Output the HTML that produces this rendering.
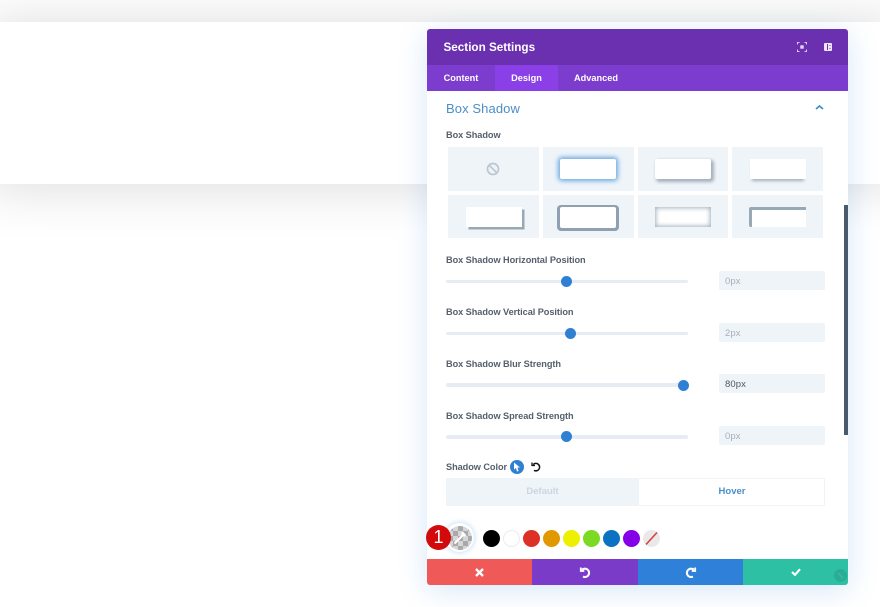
<!DOCTYPE html>
<html><head><meta charset="utf-8">
<style>
html,body{margin:0;padding:0;width:880px;height:607px;overflow:hidden;background:#fff;font-family:"Liberation Sans",sans-serif}
.a{position:absolute}
#wrap{position:absolute;left:0;top:0;width:880px;height:607px;overflow:hidden;filter:blur(.3px)}
#sec{position:absolute;left:-15px;top:22px;width:915px;height:162px;background:#fff;box-shadow:0 2px 56px rgba(0,0,0,.15)}
#panel{position:absolute;left:427px;top:29px;width:421px;height:556px;background:#fff;border-radius:3px;box-shadow:0 5px 30px rgba(43,135,218,.2)}
.lbl{position:absolute;left:446px;font-size:9.2px;font-weight:bold;color:#55606c;letter-spacing:-.06px;line-height:12px;white-space:nowrap}
.tab{position:absolute;top:65px;height:26px;line-height:26px;color:#fff;font-size:9.2px;font-weight:bold;text-align:center}
.cell{position:absolute;width:91px;height:44px;background:#eff4f9}
.bx{position:absolute;background:#fff}
.track{position:absolute;left:446px;width:242px;height:3.500px;background:#e6ecf4;border-radius:2px}
.knob{position:absolute;width:11px;height:11px;border-radius:50%;background:#2f80d2}
.inp{position:absolute;left:719px;width:106px;height:19px;background:#eff4f9;border-radius:2px;font-size:9.500px;line-height:21px;padding-left:6px;color:#a5afbb;letter-spacing:.1px;box-sizing:border-box}
.sw{position:absolute;top:530px;width:17px;height:17px;border-radius:50%}
.fb{position:absolute;top:559px;height:26px}
</style></head>
<body>
<div id="wrap">
<div id="sec"></div>
<div id="panel"></div>
<div class="a" style="left:427px;top:29px;width:421px;height:36px;background:#6a30b0;border-radius:3px 3px 0 0"></div>
<div class="a" style="left:427px;top:65px;width:421px;height:26px;background:#7c3ccd"></div>
<div class="a" style="left:495px;top:65px;width:63px;height:26px;background:#8a40e6"></div>
<div class="a" style="left:443.500px;top:40px;font-size:11.700px;font-weight:bold;color:#fff;line-height:15px;white-space:nowrap">Section Settings</div>
<svg class="a" style="left:797px;top:42px" width="10" height="10" viewBox="0 0 10 10" fill="none" stroke="#d9c8f2" stroke-width="1"><path d="M.5 2.500V.5h2M7.500 .5h2v2M9.500 7.500v2h-2M2.500 9.500h-2v-2"/><rect x="3.300" y="3.300" width="3.400" height="3.400" fill="#e6d9f7" stroke="none"/></svg>
<svg class="a" style="left:824px;top:43px" width="8" height="8" viewBox="0 0 8 8"><rect x="0" y="0" width="8" height="8" rx="1" fill="#efe6fb"/><rect x="3" y="1" width="1" height="6" fill="#6a30b0"/><rect x="5.300" y="2" width="1.500" height="1" fill="#9a75cf"/><rect x="5.300" y="5" width="1.500" height="1" fill="#9a75cf"/></svg>
<div class="tab" style="left:427px;width:68px">Content</div>
<div class="tab" style="left:495px;width:63px">Design</div>
<div class="tab" style="left:558px;width:76px">Advanced</div>
<div class="a" style="left:446px;top:101px;font-size:13px;color:#4b8fc7;line-height:16px;letter-spacing:.1px;white-space:nowrap">Box Shadow</div>
<svg class="a" style="left:815px;top:104px" width="9" height="7" viewBox="0 0 9 7" fill="none" stroke="#3f8fc6" stroke-width="1.700"><path d="M1 5l3.500-3L8 5"/></svg>
<div class="lbl" style="top:129px">Box Shadow</div>

<div class="cell" style="left:448px;top:147px"></div>
<div class="cell" style="left:543px;top:147px"></div>
<div class="cell" style="left:638px;top:147px;width:90px"></div>
<div class="cell" style="left:732px;top:147px;width:91px"></div>
<div class="cell" style="left:448px;top:195px;height:43px"></div>
<div class="cell" style="left:543px;top:195px;height:43px"></div>
<div class="cell" style="left:638px;top:195px;width:90px;height:43px"></div>
<div class="cell" style="left:732px;top:195px;height:43px"></div>
<svg class="a" style="left:486px;top:162px" width="14" height="14" viewBox="0 0 14 14" fill="none" stroke="#bcc5d0" stroke-width="1.700"><circle cx="7" cy="7" r="5.500"/><path d="M3.200 3.200l7.600 7.600"/></svg>
<div class="bx" style="left:560px;top:159px;width:56px;height:20px;border-radius:2px;box-shadow:0 0 5px 2px #6fa9e0"></div>
<div class="bx" style="left:655px;top:159px;width:56px;height:20px;border-radius:2px;box-shadow:2px 2px 3px 1px #a3b0bc"></div>
<div class="bx" style="left:750px;top:159px;width:56px;height:20px;box-shadow:0 4px 3px -2px #a3b0bc"></div>
<div class="bx" style="left:466px;top:207px;width:56px;height:20px;box-shadow:2.500px 2.500px 0 #98a9b6"></div>
<div class="a" style="left:557px;top:205px;width:62px;height:25.500px;border-radius:4px;background:#8fa1b0"></div>
<div class="bx" style="left:559.500px;top:207px;width:56.500px;height:20.500px;border-radius:2px"></div>
<div class="bx" style="left:655px;top:207px;width:56px;height:20px;box-shadow:inset 0 0 5px 1px #a3b1bd"></div>
<div class="a" style="left:749px;top:207px;width:57px;height:20px;border-radius:2px 0 0 2px;background:#98a9b6"></div>
<div class="bx" style="left:751.500px;top:209.500px;width:54.500px;height:17.500px"></div>

<div class="lbl" style="top:254px">Box Shadow Horizontal Position</div>
<div class="track" style="top:279.500px"></div><div class="knob" style="left:561px;top:276px"></div>
<div class="inp" style="top:271px">0px</div>
<div class="lbl" style="top:306px">Box Shadow Vertical Position</div>
<div class="track" style="top:331.500px"></div><div class="knob" style="left:564.500px;top:328px"></div>
<div class="inp" style="top:323px">2px</div>
<div class="lbl" style="top:358px">Box Shadow Blur Strength</div>
<div class="track" style="top:383px"></div><div class="knob" style="left:678px;top:379.500px"></div>
<div class="inp" style="top:374px;color:#4c5866">80px</div>
<div class="lbl" style="top:409.500px">Box Shadow Spread Strength</div>
<div class="track" style="top:435px"></div><div class="knob" style="left:561px;top:431px"></div>
<div class="inp" style="top:426px">0px</div>
<div class="a" style="left:844px;top:205px;width:4px;height:230px;background:#4a5a6d"></div>

<div class="lbl" style="top:461px">Shadow Color</div>
<div class="a" style="left:510px;top:460px;width:14px;height:14px;border-radius:50%;background:#2f80d2"></div>
<svg class="a" style="left:513px;top:462px" width="8" height="10" viewBox="0 0 8 10"><path d="M1 0.500L7 5.500H4.500L5.500 9 4 9.500 3 6 1 7.500z" fill="#fff"/></svg>
<svg class="a" style="left:530px;top:461px" width="12" height="12" viewBox="0 0 12 12" fill="none" stroke="#111" stroke-width="1.500"><path d="M3.200 3.600A3.700 3.700 0 1 1 4 9.300"/><path d="M2 1.500v3h3" stroke-width="1.300"/></svg>

<div class="a" style="left:446px;top:478px;width:379px;height:28px;background:#fff;border:1px solid #eff3f8;box-sizing:border-box"></div>
<div class="a" style="left:446px;top:478px;width:193px;height:28px;background:#eff4f9"></div>
<div class="a" style="left:446px;top:478px;width:193px;height:27px;line-height:27px;text-align:center;font-size:9.500px;font-weight:bold;color:#ccd5e2">Default</div>
<div class="a" style="left:639px;top:478px;width:186px;height:27px;line-height:27px;text-align:center;font-size:9.500px;font-weight:bold;color:#4b8fc7">Hover</div>

<div class="a" style="left:445px;top:523px;width:29px;height:29px;border-radius:50%;background:#fff;box-shadow:0 0 6px rgba(70,150,220,.4)"></div>
<svg class="a" style="left:448px;top:526px" width="24" height="24" viewBox="0 0 24 24">
<defs><pattern id="c" width="10" height="10" patternUnits="userSpaceOnUse"><rect width="10" height="10" fill="#d6d6d6"/><rect width="5" height="5" fill="#a9a9a9"/><rect x="5" y="5" width="5" height="5" fill="#a9a9a9"/></pattern></defs>
<circle cx="12" cy="12" r="12" fill="url(#c)"/><path d="M6.500 17.500L15 9" stroke="#fff" stroke-width="2.200"/><path d="M14 6.500l3.500 3.500" stroke="#fff" stroke-width="2.600"/></svg>
<div class="a" style="left:426px;top:525px;width:25px;height:25px;border-radius:50%;background:#d20a0c;color:#fff;font-size:18px;line-height:25px;text-align:center">1</div>
<div class="sw" style="left:483px;background:#000"></div>
<div class="sw" style="left:503px;background:#fff;border:1px solid #e8ecf0;box-sizing:border-box"></div>
<div class="sw" style="left:523px;background:#dd3127"></div>
<div class="sw" style="left:543px;background:#e09900"></div>
<div class="sw" style="left:563px;background:#edf000"></div>
<div class="sw" style="left:583px;background:#7cda24"></div>
<div class="sw" style="left:603px;background:#0c71c3"></div>
<div class="sw" style="left:623px;background:#8300e9"></div>
<svg class="a" style="left:643px;top:530px" width="17" height="17" viewBox="0 0 17 17"><circle cx="8.500" cy="8.500" r="8.500" fill="#e9e9e9"/><path d="M3 14.500L14 2.500" stroke="#d9413f" stroke-width="1.600"/></svg>

<div class="fb" style="left:427px;width:105px;background:#ef5a59;border-radius:0 0 0 3px"></div>
<div class="fb" style="left:532px;width:106px;background:#7b3bc9"></div>
<div class="fb" style="left:638px;width:105px;background:#2f80d9"></div>
<div class="fb" style="left:743px;width:105px;background:#2ec0a5;border-radius:0 0 3px 0"></div>
<svg class="a" style="left:475px;top:568px" width="9" height="9" viewBox="0 0 9 9" stroke="#fff" stroke-width="2.300"><path d="M1 1l7 7M8 1l-7 7"/></svg>
<svg class="a" style="left:579px;top:566px" width="13" height="13" viewBox="0 0 13 13" fill="none" stroke="#fff" stroke-width="2.100"><path d="M3 3.800A4.200 4.200 0 1 1 4 10.600"/><path d="M1.800 1.500v3.500h3.500" stroke-width="1.800"/></svg>
<svg class="a" style="left:684px;top:566px" width="13" height="13" viewBox="0 0 13 13" fill="none" stroke="#fff" stroke-width="2.100"><path d="M10 3.800A4.200 4.200 0 1 0 9 10.600"/><path d="M11.200 1.500v3.500H7.700" stroke-width="1.800"/></svg>
<svg class="a" style="left:791px;top:568px" width="10" height="8" viewBox="0 0 10 8" fill="none" stroke="#fff" stroke-width="2.200"><path d="M1 4l3 2.800L9 1.200"/></svg>
<div class="a" style="left:834px;top:569px;width:13px;height:13px;border-radius:50%;background:#29ad95"></div>
<svg class="a" style="left:837px;top:572px" width="7" height="7" viewBox="0 0 7 7" stroke="#3dbfa7" stroke-width="1.200"><path d="M1 1l5 5"/></svg>
</div>
</body></html>
